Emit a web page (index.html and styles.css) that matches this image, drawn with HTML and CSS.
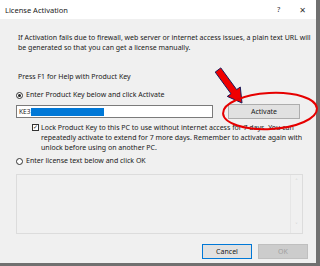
FILE: index.html
```html
<!DOCTYPE html>
<html lang="en">
<head>
  <meta charset="UTF-8" />
  <title>License Activation</title>
  <link rel="stylesheet" href="styles.css">
</head>
<body>
  <div class="dialog">
    <div class="titlebar">
      <span class="title">License Activation</span>
      <span class="title-btns"><span class="help-btn">?</span><span class="close-btn">&#x2715;</span></span>
    </div>

    <div class="content">
      <p class="intro">If Activation fails due to firewall, web server or internet access issues, a plain text URL will<br>be generated so that you can get a license manually.</p>

      <p class="help">Press F1 for Help with Product Key</p>

      <label class="radio-row"><span class="radio checked"></span>Enter Product Key below and click Activate</label>

      <div class="key-row">
        <div class="key-input"><span>KE3</span><span class="selection"></span></div>
        <button class="btn activate">Activate</button>
      </div>

      <label class="lock-row">
        <span class="checkbox">&#x2713;</span>
        <span>Lock Product Key to this PC to use without internet access for 7 days. You can repeatedly activate to extend for 7 more days. Remember to activate again with unlock before using on another PC.</span>
      </label>

      <label class="radio-row second"><span class="radio"></span>Enter license text below and click OK</label>

      <div class="license-box">
        <div class="scroll">
          <span>&#x2c4;</span>
          <span>&#x2c5;</span>
        </div>
      </div>

      <div class="actions">
        <button class="btn cancel">Cancel</button>
        <button class="btn ok" disabled>OK</button>
      </div>
    </div>

    <svg class="markup" width="320" height="266" viewBox="0 0 320 266">
      <polygon points="215.2,72.1 220.8,67.9 236.6,89.6 240.3,87 242,103 227.3,96.4 231,93.8" fill="#f00000" stroke="#1a1a5a" stroke-width="1" stroke-linejoin="round"/>
      <ellipse cx="270" cy="111" rx="47" ry="18" fill="none" stroke="#e60000" stroke-width="2" transform="rotate(-3 270 111)"/>
    </svg>
  </div>
</body>
</html>
```

FILE: styles.css
```css
* {
  box-sizing: border-box;
  margin: 0;
  padding: 0;
}

body {
  background: #707070;
  font-family: 'Noto Sans', 'DejaVu Sans', sans-serif;
  font-size: 7px;
  color: #1a1a1a;
  width: 320px;
  height: 266px;
  overflow: hidden;
}

.dialog {
  position: relative;
  width: 316px;
  height: 263px;
  background: #f0f0f0;
}

.titlebar {
  height: 19px;
  background: #fff;
  display: flex;
  justify-content: space-between;
  align-items: center;
  padding: 0 10px 0 5px;
  font-size: 7.5px;
}

.title-btns {
  display: flex;
  gap: 19px;
  color: #333;
}

.close-btn {
  font-size: 8px;
}

.content {
  padding-left: 16px;
  line-height: 10px;
}

.intro {
  margin-top: 14px;
  padding-left: 2px;
  white-space: nowrap;
}

.help {
  margin-top: 19px;
  padding-left: 2px;
}

.radio-row {
  display: flex;
  align-items: center;
  gap: 3px;
  margin-top: 8px;
  height: 10px;
}

.radio-row.second {
  margin-top: 3px;
}

.radio {
  width: 7px;
  height: 7px;
  border: 1px solid #333;
  border-radius: 50%;
  background: #fff;
  position: relative;
}

.radio.checked::after {
  content: '';
  position: absolute;
  left: 1px;
  top: 1px;
  width: 3px;
  height: 3px;
  border-radius: 50%;
  background: #222;
}

.key-row {
  display: flex;
  align-items: center;
  margin-top: 4px;
  height: 15px;
}

.key-input {
  width: 197px;
  height: 13px;
  border: 1px solid #7a7a7a;
  background: #fff;
  display: flex;
  align-items: center;
  padding-left: 2px;
  font-size: 6.5px;
}

.selection {
  width: 73px;
  height: 8px;
  background: #0078d7;
  margin-left: 1px;
}

.btn {
  font-family: inherit;
  font-size: 7px;
  color: #1a1a1a;
  background: #e1e1e1;
  border: 1px solid #adadad;
  height: 15px;
}

.activate {
  width: 72px;
  margin-left: 15px;
}

.lock-row {
  display: flex;
  gap: 2px;
  margin-top: 4px;
  padding-left: 16px;
  width: 290px;
}

.checkbox {
  flex: none;
  width: 7px;
  height: 7px;
  margin-top: 1px;
  border: 1px solid #333;
  background: #fff;
  font-size: 6px;
  line-height: 5px;
  text-align: center;
}

.license-box {
  margin-top: 8px;
  width: 287px;
  height: 60px;
  border: 1px solid #dcdcdc;
  background: #f0f0f0;
  display: flex;
  justify-content: flex-end;
}

.scroll {
  width: 12px;
  border-left: 1px solid #e6e6e6;
  display: flex;
  flex-direction: column;
  justify-content: space-between;
  align-items: center;
  padding: 2px 0;
  color: #c0c0c0;
  font-size: 7px;
}

.actions {
  display: flex;
  justify-content: flex-end;
  gap: 6px;
  margin-top: 10px;
  padding-right: 8px;
}

.cancel,
.ok {
  width: 50px;
  height: 15px;
}

.cancel {
  border-color: #0078d7;
}

.ok {
  background: #cccccc;
  border-color: #bfbfbf;
  color: #a0a0a0;
}

.markup {
  position: absolute;
  left: 0;
  top: 0;
  pointer-events: none;
}
```
